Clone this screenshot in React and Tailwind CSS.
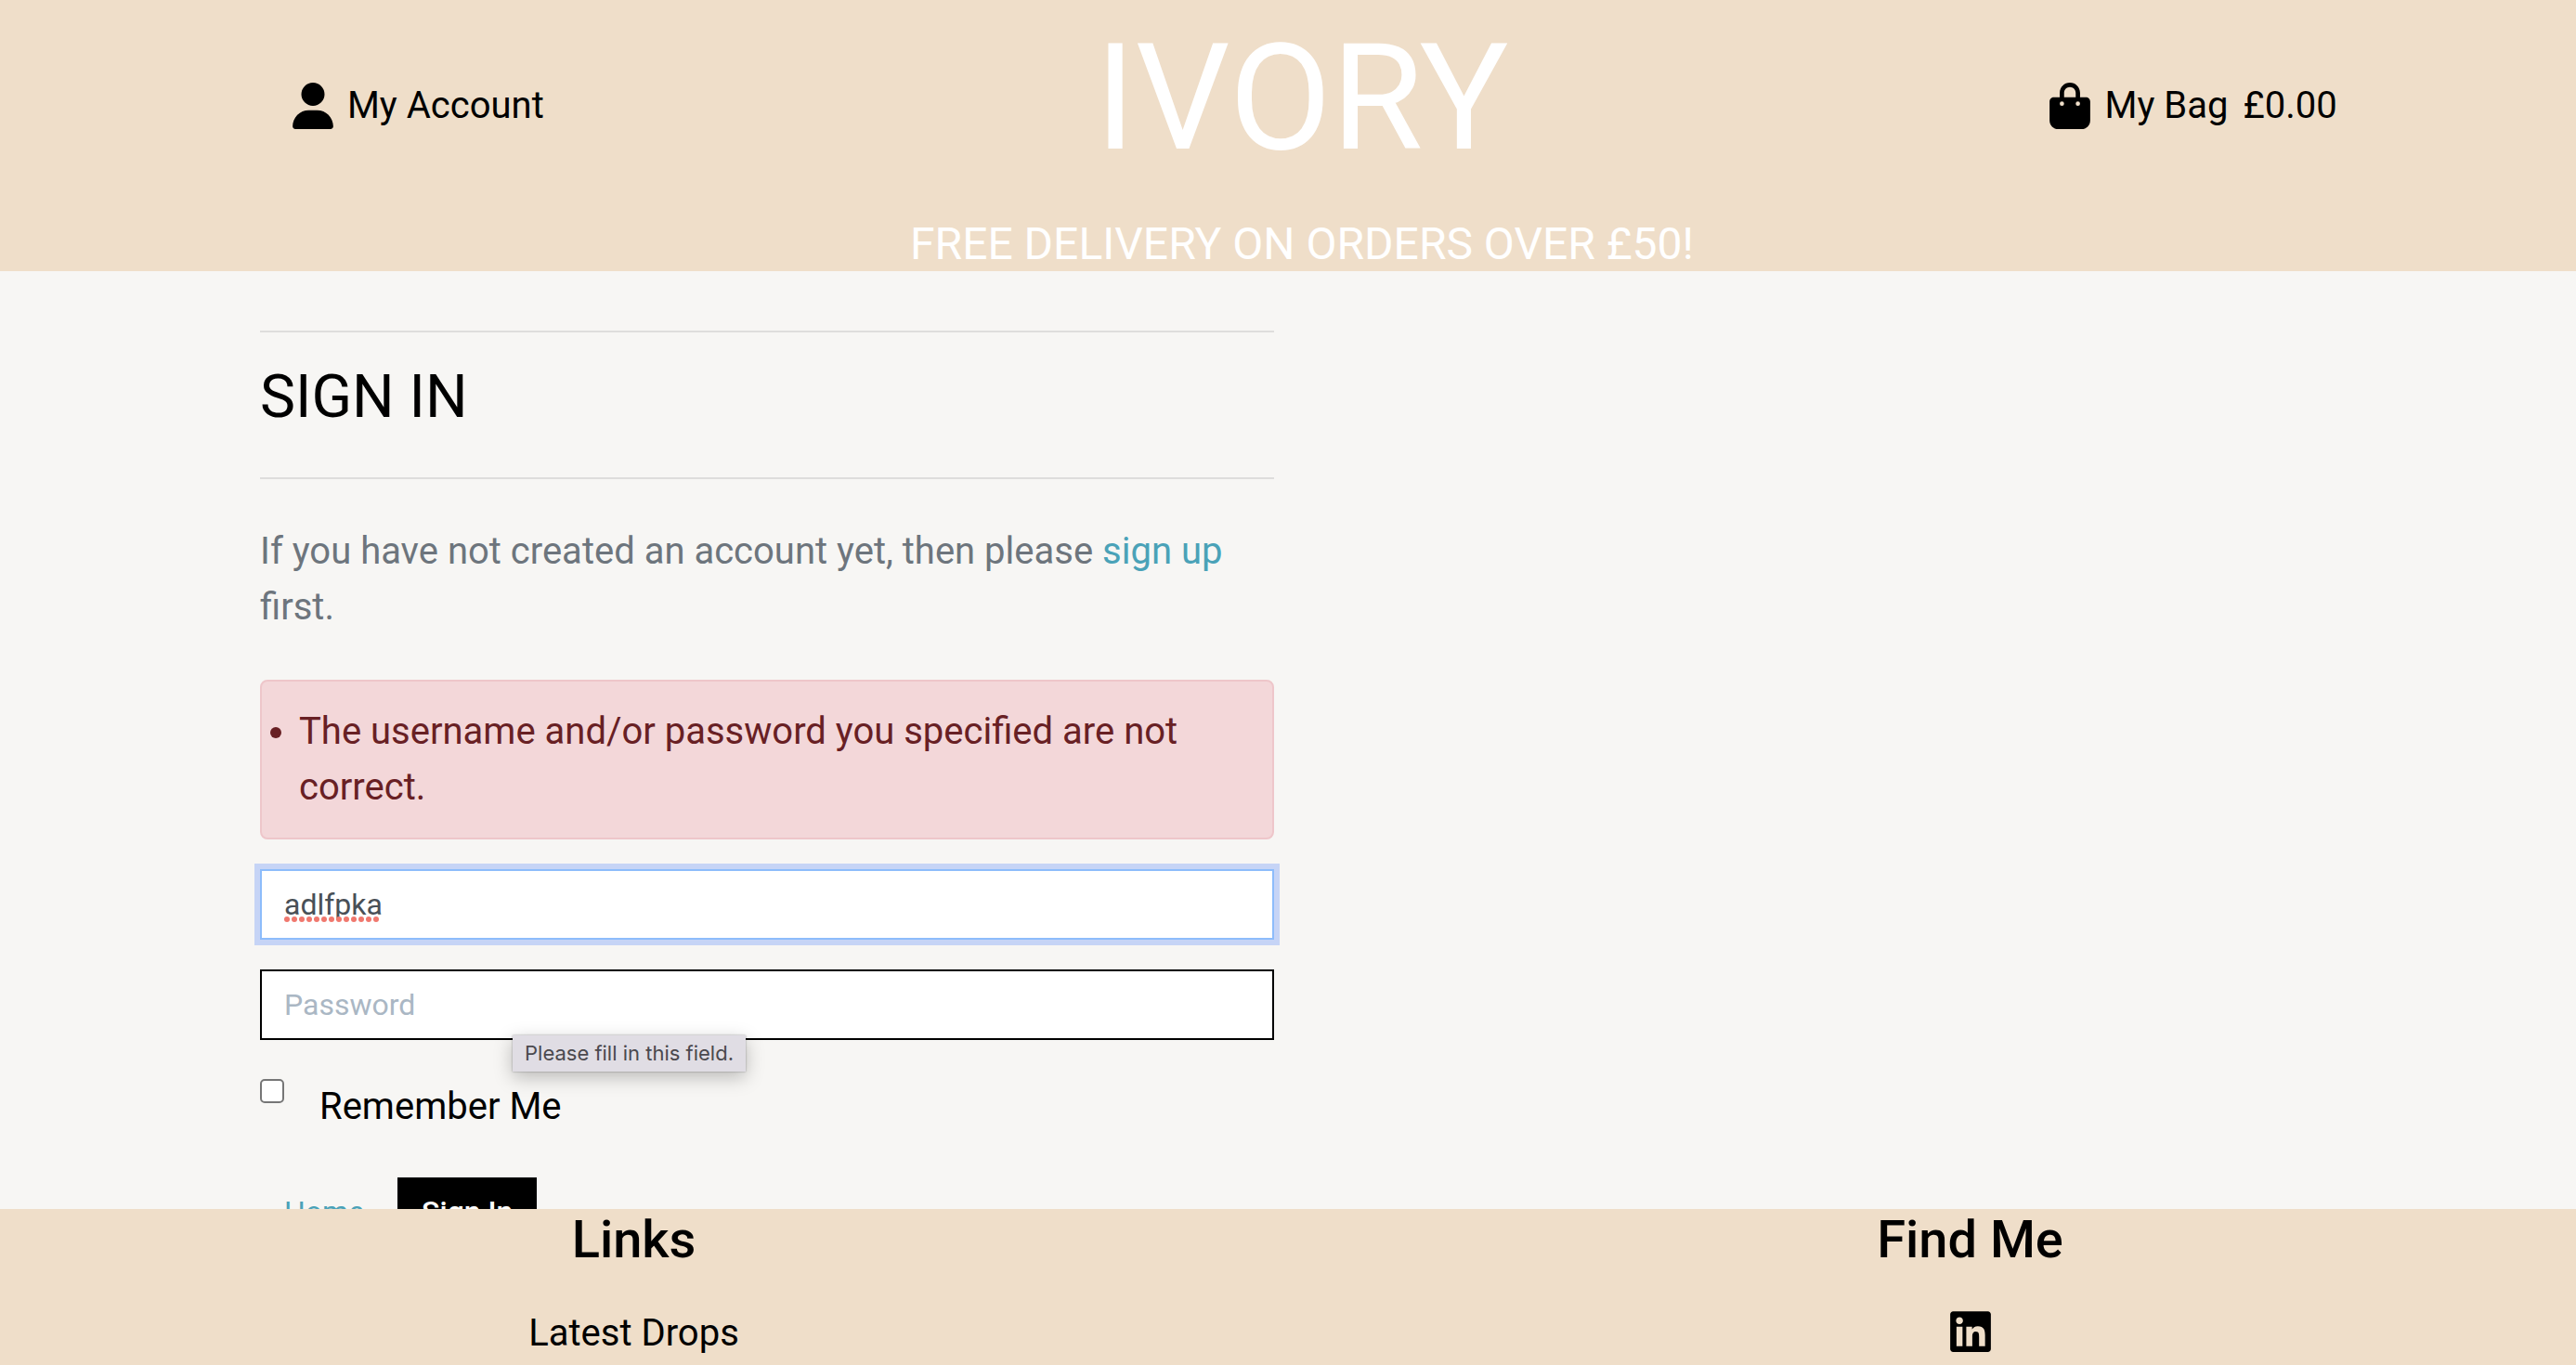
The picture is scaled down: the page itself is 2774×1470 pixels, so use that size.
import React from "react";
import { FaUser, FaBagShopping, FaLinkedin } from "react-icons/fa6";

const dots = Array.from({ length: 13 }, (_, i) => i);

function Header() {
  return (
    <header className="shrink-0 bg-[#efdec9] pl-[30px]">
      <div className="grid grid-cols-3 gap-[120px] pt-[10px]">
        <div className="flex justify-center pt-[72px] pl-[6px]">
          <a href="#account" className="flex h-[64px] items-center gap-[15px] text-black">
            <FaUser className="h-[50px] w-[44px]" />
            <span>My Account</span>
          </a>
        </div>
        <a href="#home" className="text-center text-[160px] leading-[192px] text-white">
          IVORY
        </a>
        <div className="flex justify-center pt-[72px] pl-[10px]">
          <a href="#bag" className="flex h-[64px] items-center gap-4 text-black">
            <FaBagShopping className="h-[50px] w-[44px]" />
            <span>My Bag</span>
            <span>£0.00</span>
          </a>
        </div>
      </div>
      <h4 className="mt-[31px] text-center text-[48px] font-normal leading-[59px] text-white">
        FREE DELIVERY ON ORDERS OVER £50!
      </h4>
    </header>
  );
}

function SignIn() {
  return (
    <section>
      <hr className="border-t-2 border-[#dedddc]" />
      <h1 className="mt-8 text-[64px] font-normal leading-[76px]">SIGN IN</h1>
      <hr className="mt-12 border-t-2 border-[#dedddc]" />
      <p className="mt-12 text-[#6d757d]">
        If you have not created an account yet, then please{" "}
        <a href="#signup" className="text-[#4aa2b8]">sign up</a> first.
      </p>
      <form className="mt-12" onSubmit={(e) => e.preventDefault()}>
        <div role="alert" className="rounded-lg border-2 border-[#eec6ca] bg-[#f3d7d9] py-6 pr-10 pl-10 text-[#682024]">
          <ul className="list-disc">
            <li>The username and/or password you specified are not correct.</li>
          </ul>
        </div>
        <div className="relative mt-8">
          <input
            type="text"
            aria-label="Username"
            defaultValue="adlfpka"
            spellCheck={false}
            className="block h-[76px] w-full border-2 border-[#8dbcfb] bg-white px-6 text-[32px] text-[#495057] shadow-[0_0_0_6px_#c6d4f6] outline-none"
          />
          <svg className="pointer-events-none absolute top-[51px] left-[26px] h-[6px] w-[104px]" viewBox="0 0 104 6" aria-hidden="true">
            {dots.map((i) => (
              <circle key={i} cx={i * 8 + 3} cy="3" r="3" fill="#f0786e" />
            ))}
          </svg>
        </div>
        <div className="relative mt-8">
          <input
            type="password"
            aria-label="Password"
            placeholder="Password"
            className="block h-[76px] w-full border-2 border-black bg-white px-6 text-[32px] text-[#495057] outline-none placeholder:text-[#aab7c4]"
          />
          <div role="tooltip" className="absolute top-[71px] left-[272px] bg-[#e0dde4] px-[13px] font-['Inter',sans-serif] text-[22px] leading-[39px] whitespace-nowrap text-[#4b494e] shadow-[0_6px_20px_rgba(0,0,0,0.25),0_0_2px_rgba(0,0,0,0.35)]">
            Please fill in this field.
          </div>
        </div>
        <div className="mt-[42px] flex items-start gap-[38px]">
          <input
            id="remember"
            type="checkbox"
            className="size-[26px] shrink-0 appearance-none rounded-[5px] border-2 border-[#767676] bg-white"
          />
          <label htmlFor="remember">Remember Me</label>
        </div>
        <div className="mt-[46px] flex items-start gap-[10px]">
          <a href="#home" className="px-[26px] text-[32px] leading-[74px] text-[#4aa2b8]">Home</a>
          <button type="submit" className="bg-black px-[26px] text-[32px] font-medium leading-[74px] text-white">
            Sign In
          </button>
        </div>
      </form>
    </section>
  );
}

function Footer() {
  return (
    <footer className="grid h-[168px] shrink-0 grid-cols-2 gap-[134px] bg-[#efdec9] pl-[30px] text-center">
      <div>
        <h3 className="text-[56px] font-medium leading-[66px]">Links</h3>
        <a href="#drops" className="mt-[38px] block text-black">Latest Drops</a>
      </div>
      <div>
        <h3 className="text-[56px] font-medium leading-[66px]">Find Me</h3>
        <a href="#linkedin" aria-label="LinkedIn" className="mt-9 flex h-[60px] items-center justify-center text-black">
          <FaLinkedin className="h-[50px] w-[44px]" />
        </a>
      </div>
    </footer>
  );
}

export default function App() {
  return (
    <div className="flex h-screen flex-col overflow-hidden bg-[#f7f6f4] font-['Roboto',sans-serif] text-[40px] leading-[60px] text-black">
      <Header />
      <main className="grid min-h-0 flex-1 grid-cols-2 gap-[60px] overflow-hidden pt-16 pr-[250px] pl-[280px]">
        <SignIn />
      </main>
      <Footer />
    </div>
  );
}
